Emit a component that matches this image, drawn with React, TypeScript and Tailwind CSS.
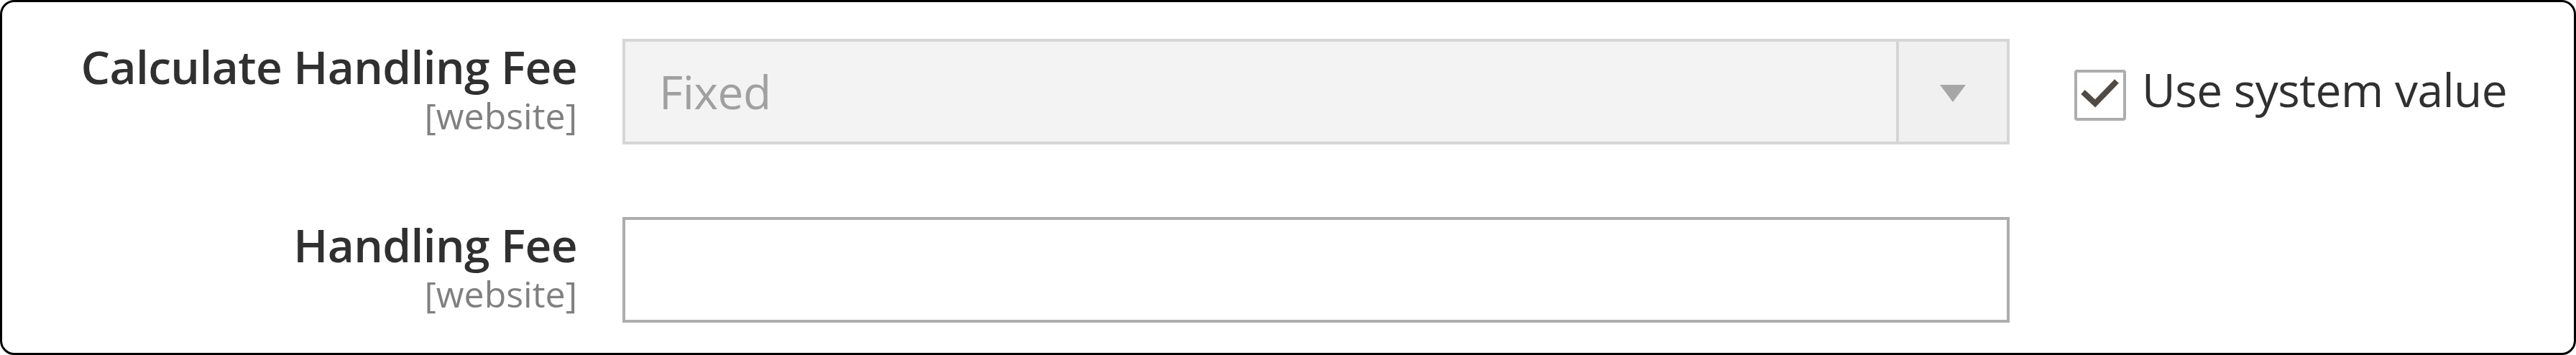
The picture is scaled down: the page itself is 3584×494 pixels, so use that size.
import React from "react";

function Label({ title }: { title: string }) {
  return (
    <div className="w-[800px] shrink-0 flex flex-col items-end text-right">
      <span className="text-[64px] leading-[77px] font-semibold tracking-[-0.6px] text-[#303030]">{title}</span>
      <span className="text-[50px] leading-[60px] font-normal text-[#808080]">[website]</span>
    </div>
  );
}

export default function App() {
  return (
    <div
      className="w-[3584px] h-[494px] box-border border-[3px] border-black rounded-[20px] bg-white pt-[51px] flex flex-col gap-[101px] overflow-hidden"
      style={{ fontFamily: '"Open Sans", "Noto Sans", sans-serif' }}
    >
      <div className="flex items-start h-[147px]">
        <Label title="Calculate Handling Fee" />
        <div className="ml-[63px] w-[1930px] h-[147px] shrink-0 box-border border-[4px] border-[#d6d6d6] bg-[#f3f3f3] flex">
          <div className="flex-1 flex items-center pl-[47px] text-[64px] text-[#a0a0a0] font-normal tracking-[-0.4px]">Fixed</div>
          <div className="w-[154px] h-full box-border border-l-[4px] border-[#d6d6d6] bg-[#f0f0f0] flex items-center justify-center">
            <svg width="36" height="24" viewBox="0 0 36 24" className="mt-[4px]">
              <polygon points="0,0 36,0 18,24" fill="#a6a6a6" />
            </svg>
          </div>
        </div>
        <div className="ml-[90px] mt-[43px] w-[72px] h-[71px] shrink-0 box-border border-[4px] border-[#adadad] rounded-[4px] bg-white">
          <svg width="64" height="63" viewBox="0 0 64 63" className="block">
            <path d="M8 27 L25 43 L55 12" fill="none" stroke="#514943" strokeWidth="8" strokeLinecap="butt" strokeLinejoin="miter" />
          </svg>
        </div>
        <span className="ml-[22px] mt-[32px] text-[64px] leading-[77px] font-normal tracking-[-0.5px] text-[#303030] whitespace-nowrap">
          Use system value
        </span>
      </div>
      <div className="flex items-start h-[147px]">
        <Label title="Handling Fee" />
        <div className="ml-[63px] w-[1930px] h-[147px] shrink-0 box-border border-[4px] border-[#adadad] bg-white" />
      </div>
    </div>
  );
}
